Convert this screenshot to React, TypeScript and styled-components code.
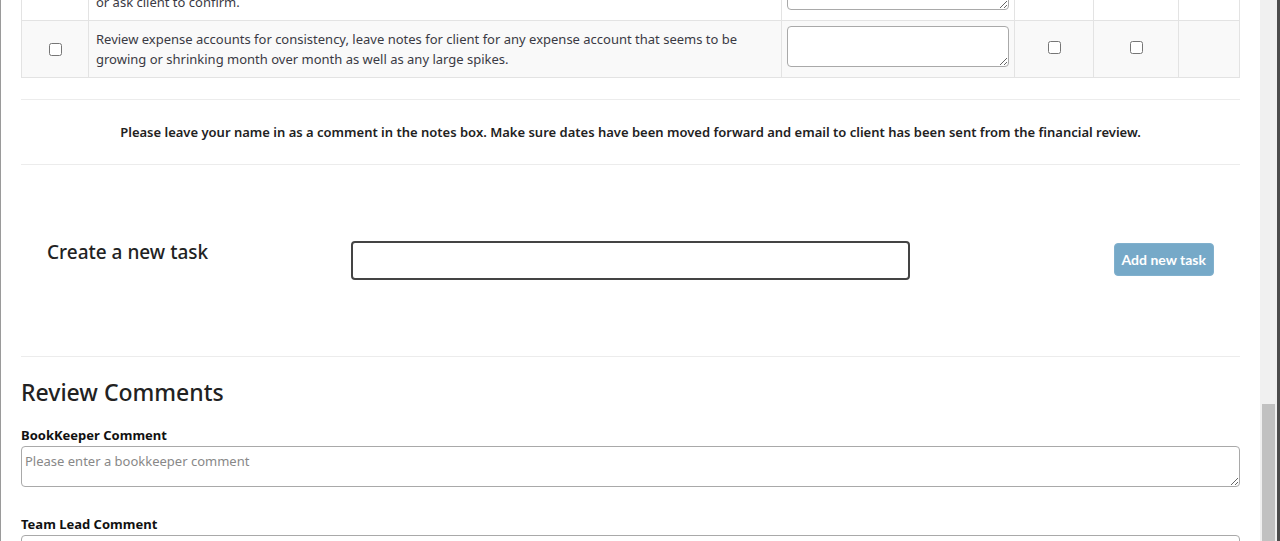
import styled, { createGlobalStyle } from 'styled-components';

const tasks = [
  {
    id: 1,
    text: 'Confirm that all balance sheet accounts reconcile to the statements on file, flag anything that does not tie out or ask client to confirm.',
  },
  {
    id: 2,
    text: 'Review expense accounts for consistency, leave notes for client for any expense account that seems to be growing or shrinking month over month as well as any large spikes.',
  },
];

function App() {
  return (
    <Window>
      <GlobalStyle />
      <Viewport>
        <Page>
          <TaskTable>
            <colgroup>
              <col style={{ width: 67 }} />
              <col />
              <col style={{ width: 233 }} />
              <col style={{ width: 79 }} />
              <col style={{ width: 85 }} />
              <col style={{ width: 61 }} />
            </colgroup>
            <tbody>
              {tasks.map((task, i) => (
                <TaskRow key={task.id} striped={i % 2 === 1}>
                  <CheckCell><input type="checkbox" /></CheckCell>
                  <TextCell>{task.text}</TextCell>
                  <NotesCell><NotesBox /></NotesCell>
                  <CheckCell raised>{i === 1 && <input type="checkbox" />}</CheckCell>
                  <CheckCell raised>{i === 1 && <input type="checkbox" />}</CheckCell>
                  <CheckCell />
                </TaskRow>
              ))}
            </tbody>
          </TaskTable>

          <Notice>
            Please leave your name in as a comment in the notes box. Make sure dates have been moved forward and email to client has been sent from the financial review.
          </Notice>

          <NewTaskRow>
            <NewTaskLabel>Create a new task</NewTaskLabel>
            <NewTaskInputCol>
              <NewTaskInput type="text" />
            </NewTaskInputCol>
            <NewTaskButtonCol>
              <AddButton type="button">Add new task</AddButton>
            </NewTaskButtonCol>
          </NewTaskRow>

          <Comments>
            <CommentsTitle>Review Comments</CommentsTitle>
            <CommentField>
              <CommentLabel>BookKeeper Comment</CommentLabel>
              <CommentBox placeholder="Please enter a bookkeeper comment" />
            </CommentField>
            <CommentField>
              <CommentLabel>Team Lead Comment</CommentLabel>
              <CommentBox placeholder="Please enter a team lead comment" />
            </CommentField>
          </Comments>
        </Page>
      </Viewport>
      <ScrollTrack>
        <ScrollThumb />
      </ScrollTrack>
    </Window>
  );
}

const GlobalStyle = createGlobalStyle`
  html, body {
    margin: 0;
    padding: 0;
    background: #ffffff;
    overflow: hidden;
  }
  body {
    font-family: 'Noto Sans', 'Open Sans', sans-serif;
    color: #333;
  }
`;

const Window = styled.div`
  display: flex;
  width: 1280px;
  height: 541px;
  overflow: hidden;
`;

const Viewport = styled.div`
  flex: 1;
  height: 541px;
  overflow: hidden;
  border-left: 1px solid #9a9a9a;
`;

// the page is shown scrolled down: the first task row sits partly above the fold
const Page = styled.div`
  margin-top: -37px;
  padding: 0 20px 0 20px;
`;

const TaskTable = styled.table`
  width: 100%;
  border-collapse: collapse;
  table-layout: fixed;
  font-size: 13px;
  line-height: 20px;
`;

const TaskRow = styled.tr<{ striped: boolean }>`
  background: ${(p) => (p.striped ? '#f9f9f9' : '#ffffff')};
`;

const Cell = styled.td`
  border: 1px solid #e3e3e3;
  padding: 8px 7px;
  vertical-align: middle;
`;

const CheckCell = styled(Cell)<{ raised?: boolean }>`
  text-align: center;
  input {
    margin: ${(p) => (p.raised ? '0 0 5px' : '0 0 2px')};
    width: 13px;
    height: 13px;
    vertical-align: middle;
  }
`;

const TextCell = styled(Cell)`
  color: #3a3a44;
`;

const NotesCell = styled(Cell)`
  vertical-align: top;
  padding: 5px 5px 0;
`;

const NotesBox = styled.textarea`
  display: block;
  box-sizing: border-box;
  width: 100%;
  height: 41px;
  border: 1px solid #a9a9a9;
  border-radius: 4px;
  font-family: inherit;
`;

const Notice = styled.div`
  margin-top: 21px;
  border-top: 1px solid #ececec;
  border-bottom: 1px solid #ececec;
  padding: 22px 0;
  text-align: center;
  font-size: 13px;
  font-weight: 600;
  line-height: 20px;
  color: #222;
`;

const NewTaskRow = styled.div`
  display: grid;
  grid-template-columns: 1fr 2fr 1fr;
  align-items: center;
  padding: 76px 0;
  border-bottom: 1px solid #ececec;
`;

const NewTaskLabel = styled.div`
  align-self: start;
  padding: 0 26px;
  font-size: 19px;
  font-weight: 500;
  line-height: 23px;
  color: #222;
`;

const NewTaskInputCol = styled.div`
  padding: 0 25px;
`;

const NewTaskInput = styled.input`
  display: block;
  box-sizing: border-box;
  width: 100%;
  height: 39px;
  border: 2px solid #444;
  border-radius: 4px;
  background: #fff;
`;

const NewTaskButtonCol = styled.div`
  display: flex;
  justify-content: flex-end;
  padding: 0 26px;
`;

const AddButton = styled.button`
  height: 33px;
  margin-bottom: 2px;
  padding: 0 7px;
  border: 1px solid #80b0cd;
  border-radius: 4px;
  background: #76a9c8;
  color: #fff;
  font-family: 'Lato', sans-serif;
  font-size: 14px;
  font-weight: 700;
`;

const Comments = styled.div`
  padding-top: 21px;
`;

const CommentsTitle = styled.h2`
  margin: 0 0 20px;
  font-size: 23px;
  font-weight: 500;
  line-height: 28px;
  color: #222;
`;

const CommentField = styled.div`
  margin-bottom: 28px;
`;

const CommentLabel = styled.div`
  font-size: 13px;
  font-weight: 700;
  line-height: 18px;
  margin-bottom: 2px;
  color: #111;
`;

const CommentBox = styled.textarea`
  display: block;
  box-sizing: border-box;
  width: 100%;
  height: 41px;
  padding: 5px 3px 3px;
  border: 1px solid #a9a9a9;
  border-radius: 4px;
  font-family: 'Noto Sans', sans-serif;
  font-size: 13px;
  color: #333;
  &::placeholder {
    color: #888;
  }
`;

const ScrollTrack = styled.div`
  width: 17px;
  height: 541px;
  background: #f0f0f0;
  border-right: 3px solid #4c4c4c;
  display: flex;
  flex-direction: column;
  align-items: center;
`;

const ScrollThumb = styled.div`
  margin-top: 404px;
  width: 13px;
  flex: 1;
  background: #c1c1c1;
`;

export default App;
